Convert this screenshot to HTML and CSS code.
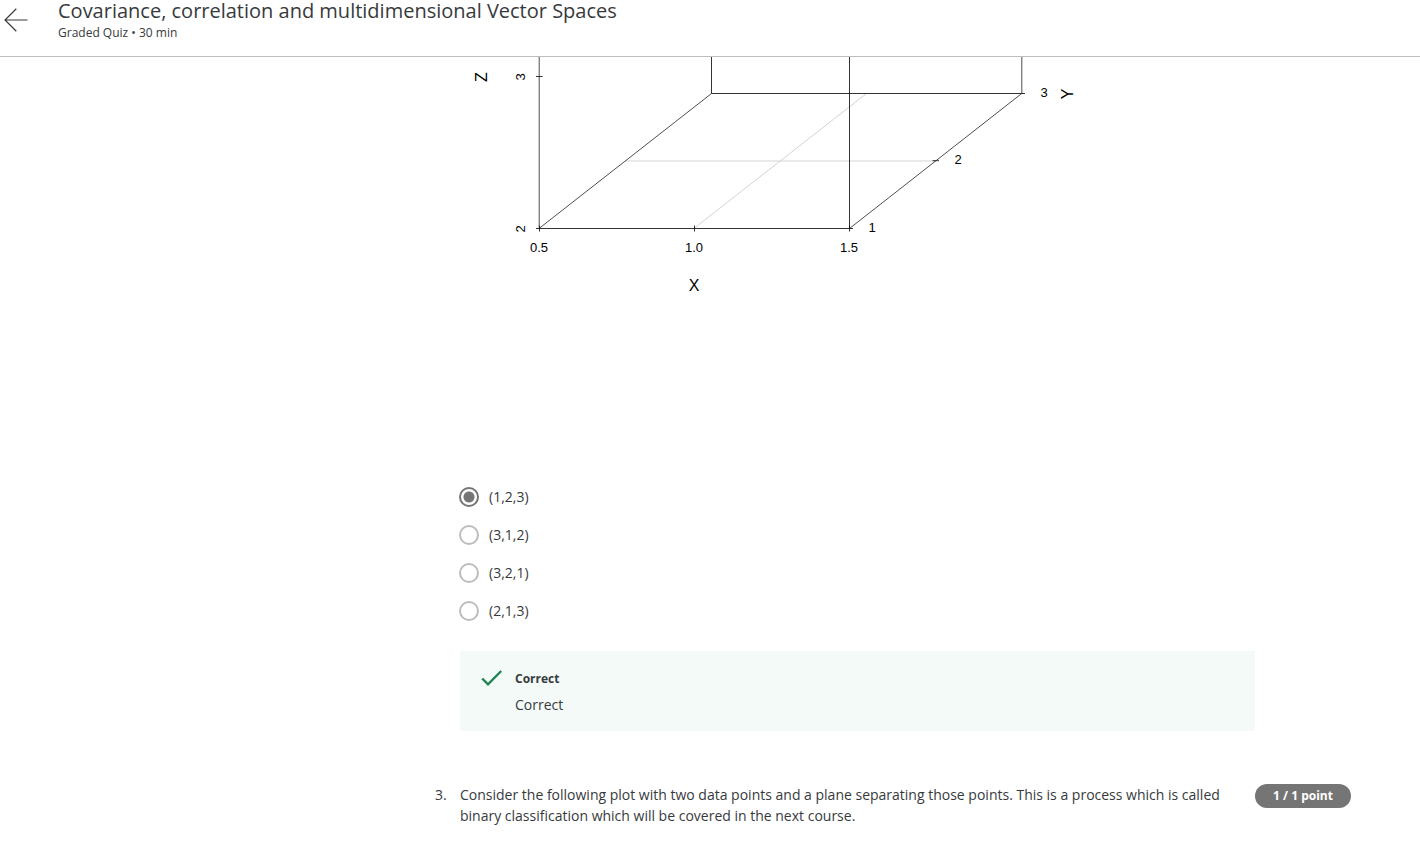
FILE: index.html
```html
<!DOCTYPE html>
<html lang="en">
<head>
<meta charset="utf-8">
<meta name="viewport" content="width=device-width, initial-scale=1">
<title>Covariance, correlation and multidimensional Vector Spaces</title>
<link rel="stylesheet" href="styles.css">
</head>
<body>
<header class="quiz-header">
  <button class="back" type="button" aria-label="Back">
    <svg width="24" height="24" viewBox="0 0 24 24"><path d="M23.5 12H1M12.3 .8L1 12l11.3 11.2"/></svg>
  </button>
  <div class="heading">
    <h1 class="title">Covariance, correlation and multidimensional Vector Spaces</h1>
    <p class="meta">Graded Quiz • 30 min</p>
  </div>
</header>
<main class="quiz">
  <section class="question">
    <div class="body">
      <svg class="plot" viewBox="460 57 795 420" role="img" aria-label="Three-dimensional plot with X, Y and Z axes">
        <g class="grid-line">
          <path d="M625 161H936M694.5 228L866.500 93.500"/>
        </g>
        <g class="axis">
          <path d="M711.500 57V93.500M849.500 57V228.500"/>
          <path d="M711.500 93.500H1025M536 228.500H853M536 76.500H542.500M932.500 160.700H939"/>
          <path d="M539.500 225.500V231.500M694.500 225.500V231.500M849.500 225.500V231.500"/>
          <path class="soft" d="M539.200 57V228.500M1021.800 57V93.500M539 228.500L711.500 93.500M849.500 228.500L1021.700 93.500"/>
        </g>
        <g class="tick">
          <text x="539" y="252">0.5</text>
          <text x="694" y="252">1.0</text>
          <text x="849" y="252">1.5</text>
          <text x="872" y="232">1</text>
          <text x="958" y="164">2</text>
          <text x="1044" y="97">3</text>
          <text transform="translate(525 77) rotate(-90)">3</text>
          <text transform="translate(525 229) rotate(-90)">2</text>
        </g>
        <g class="name">
          <text x="694" y="291">X</text>
          <text transform="translate(487 77) rotate(-90)">Z</text>
          <text transform="translate(1073 94) rotate(-90)">Y</text>
        </g>
      </svg>
      <div class="options" role="radiogroup" aria-label="Answer">
        <label class="option"><input type="radio" name="q2" checked><span>(1,2,3)</span></label>
        <label class="option"><input type="radio" name="q2"><span>(3,1,2)</span></label>
        <label class="option"><input type="radio" name="q2"><span>(3,2,1)</span></label>
        <label class="option"><input type="radio" name="q2"><span>(2,1,3)</span></label>
      </div>
      <div class="feedback">
        <svg class="check" width="22" height="18" viewBox="0 0 22 18"><path d="M1.200 9.500L7 15.300L20.200 2"/></svg>
        <div>
          <strong class="verdict">Correct</strong>
          <p class="note">Correct</p>
        </div>
      </div>
    </div>
  </section>
  <section class="question">
    <span class="number">3.</span>
    <p class="body prompt">Consider the following plot with two data points and a plane separating those points. This is a process which is called binary classification which will be covered in the next course.</p>
    <span class="points">1 / 1 point</span>
  </section>
</main>
</body>
</html>
```

FILE: styles.css
```css
* {
  box-sizing: border-box;
}

body {
  margin: 0;
  background: #fff;
  color: #373a3c;
  font: 14px/21px "Open Sans", "Noto Sans", sans-serif;
}

h1, p {
  margin: 0;
}

.quiz-header {
  display: flex;
  align-items: flex-start;
  gap: 30px;
  padding: 0 4px 14px;
  border-bottom: 1px solid #bdbdbd;
}

.back {
  display: flex;
  padding: 8px 0 0;
  border: 0;
  background: none;
  cursor: pointer;
}

.back path {
  fill: none;
  stroke: #373a3c;
  stroke-width: 1.2;
}

.title {
  font-size: 20px;
  font-weight: 400;
  line-height: 22px;
}

.meta {
  padding-top: 2px;
  font-size: 12px;
  line-height: 18px;
}

.quiz {
  display: grid;
  gap: 53px;
  padding: 0 69px 40px 435px;
}

.question {
  display: grid;
  grid-template-columns: 25px 1fr 96px;
  align-items: start;
}

.body {
  grid-column: 2;
}

.plot {
  display: block;
  width: 100%;
  height: auto;
}

.grid-line path {
  fill: none;
  stroke: #d3d3d3;
}

.axis path {
  fill: none;
  stroke: #000;
  stroke-width: 0.8;
}

.axis .soft {
  stroke: #222;
}

.tick, .name {
  fill: #000;
  font-family: "Liberation Sans", Arial, sans-serif;
  text-anchor: middle;
}

.tick {
  font-size: 13px;
}

.name {
  font-size: 16px;
}

.options {
  display: grid;
  gap: 17px;
  padding-top: 9px;
}

.option {
  display: flex;
  align-items: center;
  gap: 10px;
}

.option input {
  appearance: none;
  width: 20px;
  height: 20px;
  margin: 0 0 0 -1px;
  border: 2px solid #bdbdbd;
  border-radius: 50%;
  background: #fff;
}

.option input:checked {
  border-color: #757575;
  background: radial-gradient(circle, #757575 5px, #fff 6px);
}

.feedback {
  display: flex;
  gap: 12px;
  margin-top: 30px;
  padding: 17px 21px 16px;
  background: #f4faf8;
}

.check {
  margin-top: 1px;
}

.check path {
  fill: none;
  stroke: #1f8354;
  stroke-width: 2.4;
}

.verdict {
  display: block;
  font-size: 12px;
  line-height: 22px;
}

.note {
  padding-top: 4px;
}

.points {
  border-radius: 12px;
  background: #757575;
  color: #fff;
  font-size: 12px;
  font-weight: 700;
  line-height: 24px;
  text-align: center;
}
```
